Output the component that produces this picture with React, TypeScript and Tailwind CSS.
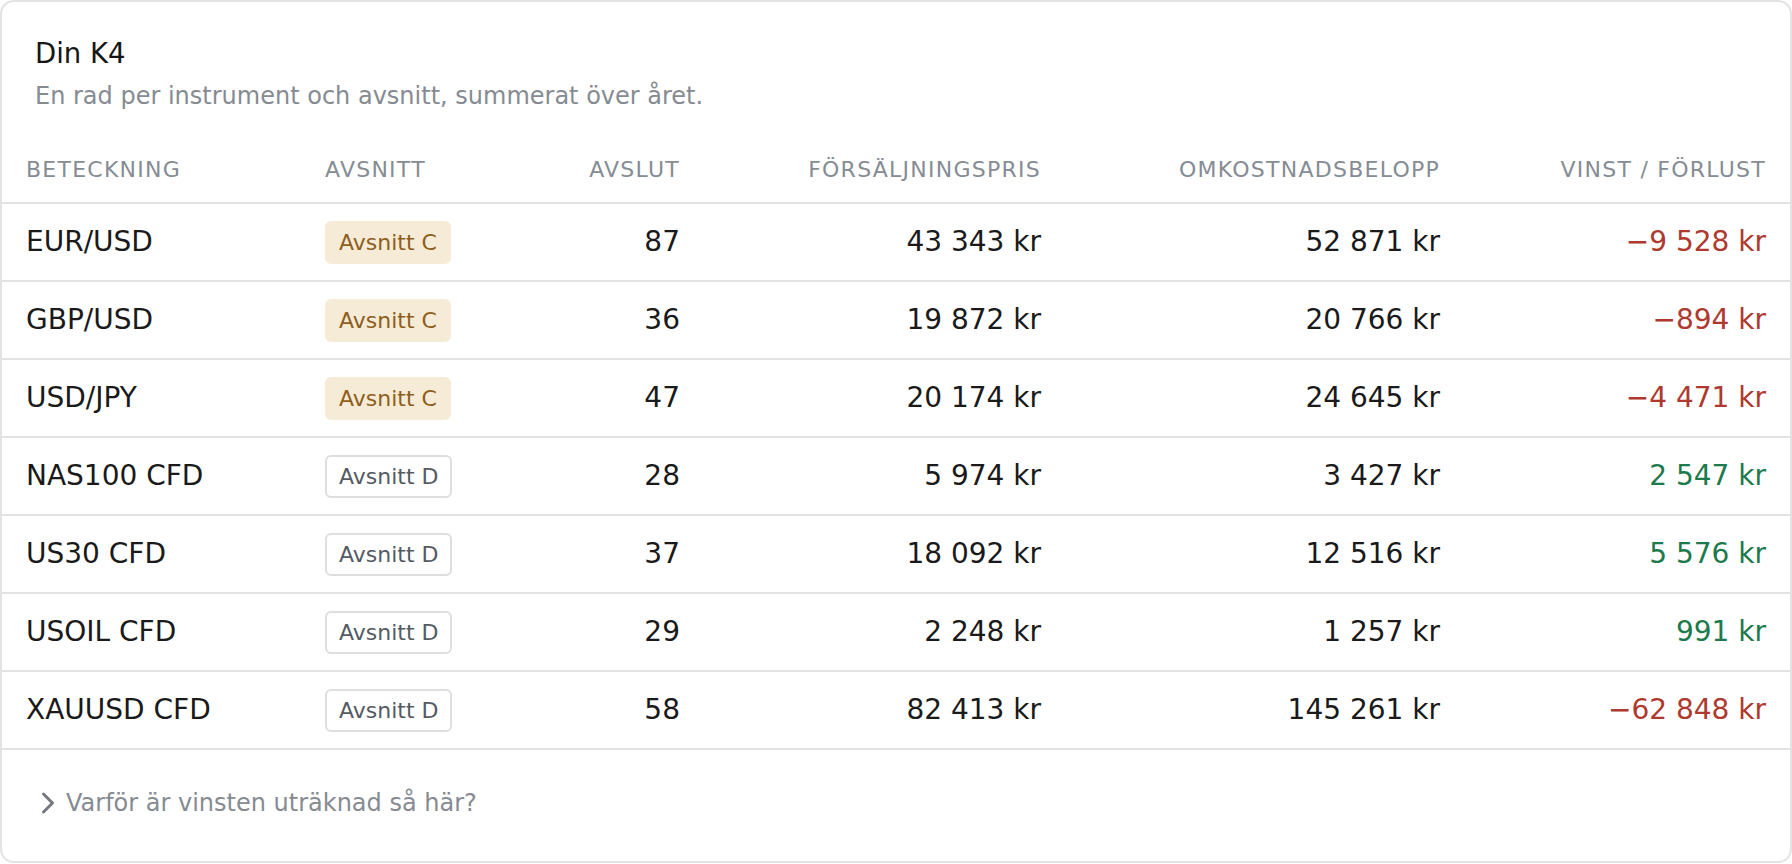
import React from "react";

type Row = {
  name: string;
  section: "C" | "D";
  count: number;
  sale: string;
  cost: string;
  pl: string;
  positive: boolean;
};

const rows: Row[] = [
  { name: "EUR/USD", section: "C", count: 87, sale: "43 343 kr", cost: "52 871 kr", pl: "\u22129 528 kr", positive: false },
  { name: "GBP/USD", section: "C", count: 36, sale: "19 872 kr", cost: "20 766 kr", pl: "\u2212894 kr", positive: false },
  { name: "USD/JPY", section: "C", count: 47, sale: "20 174 kr", cost: "24 645 kr", pl: "\u22124 471 kr", positive: false },
  { name: "NAS100 CFD", section: "D", count: 28, sale: "5 974 kr", cost: "3 427 kr", pl: "2 547 kr", positive: true },
  { name: "US30 CFD", section: "D", count: 37, sale: "18 092 kr", cost: "12 516 kr", pl: "5 576 kr", positive: true },
  { name: "USOIL CFD", section: "D", count: 29, sale: "2 248 kr", cost: "1 257 kr", pl: "991 kr", positive: true },
  { name: "XAUUSD CFD", section: "D", count: 58, sale: "82 413 kr", cost: "145 261 kr", pl: "\u221262 848 kr", positive: false },
];

const gridCols = "grid grid-cols-[299px_240px_115px_361px_399px_326px]";

function Badge({ section }: { section: "C" | "D" }) {
  if (section === "C") {
    return (
      <span className="inline-flex h-[43px] items-center rounded-[6px] border-2 border-[#f6ebd7] bg-[#f6ebd7] px-[12px] text-[22px] leading-none text-[#8e5e1c]">
        Avsnitt C
      </span>
    );
  }
  return (
    <span className="inline-flex h-[43px] items-center rounded-[6px] border-2 border-[#dedede] bg-white px-[12px] text-[22px] leading-none text-[#545b63]">
      Avsnitt D
    </span>
  );
}

export default function App() {
  return (
    <div
      className="min-h-[864px] w-full bg-white"
      style={{ fontFamily: '"DejaVu Sans", "Noto Sans", sans-serif' }}
    >
      <div className="w-full overflow-hidden rounded-[14px] border-2 border-[#e3e3e3] bg-white">
        <div className="pl-[33px] pt-[33px] pb-[23px]">
          <div className="text-[27.5px] leading-[36px] text-[#161616]">Din K4</div>
          <div className="mt-[8px] text-[24px] leading-[34px] text-[#868b92]">
            En rad per instrument och avsnitt, summerat över året.
          </div>
        </div>

        <div className={`${gridCols} h-[68px] items-center border-b-2 border-[#e3e3e3] px-[24px] text-[22px] tracking-[1.25px] text-[#868c94]`}>
          <div>BETECKNING</div>
          <div>AVSNITT</div>
          <div className="text-right">AVSLUT</div>
          <div className="text-right">FÖRSÄLJNINGSPRIS</div>
          <div className="text-right">OMKOSTNADSBELOPP</div>
          <div className="text-right">VINST / FÖRLUST</div>
        </div>

        {rows.map((r) => (
          <div
            key={r.name}
            className={`${gridCols} h-[78px] items-center border-b-2 border-[#e3e3e3] px-[24px] text-[28px] text-[#1a1a1a]`}
          >
            <div>{r.name}</div>
            <div>
              <Badge section={r.section} />
            </div>
            <div className="text-right">{r.count}</div>
            <div className="text-right">{r.sale}</div>
            <div className="text-right">{r.cost}</div>
            <div className={`text-right ${r.positive ? "text-[#1d7a4c]" : "text-[#ae3a2f]"}`}>{r.pl}</div>
          </div>
        ))}

        <div className="flex h-[111px] items-center pb-[6px] pl-[38px] text-[24px] text-[#868b92]">
          <svg width="16" height="24" viewBox="0 0 16 24" className="mr-[10px]" fill="none">
            <path d="M3.5 3 L12.5 12 L3.5 21" stroke="#74787e" strokeWidth="3" strokeLinecap="round" strokeLinejoin="round" />
          </svg>
          <span>Varför är vinsten uträknad så här?</span>
        </div>
      </div>
    </div>
  );
}
